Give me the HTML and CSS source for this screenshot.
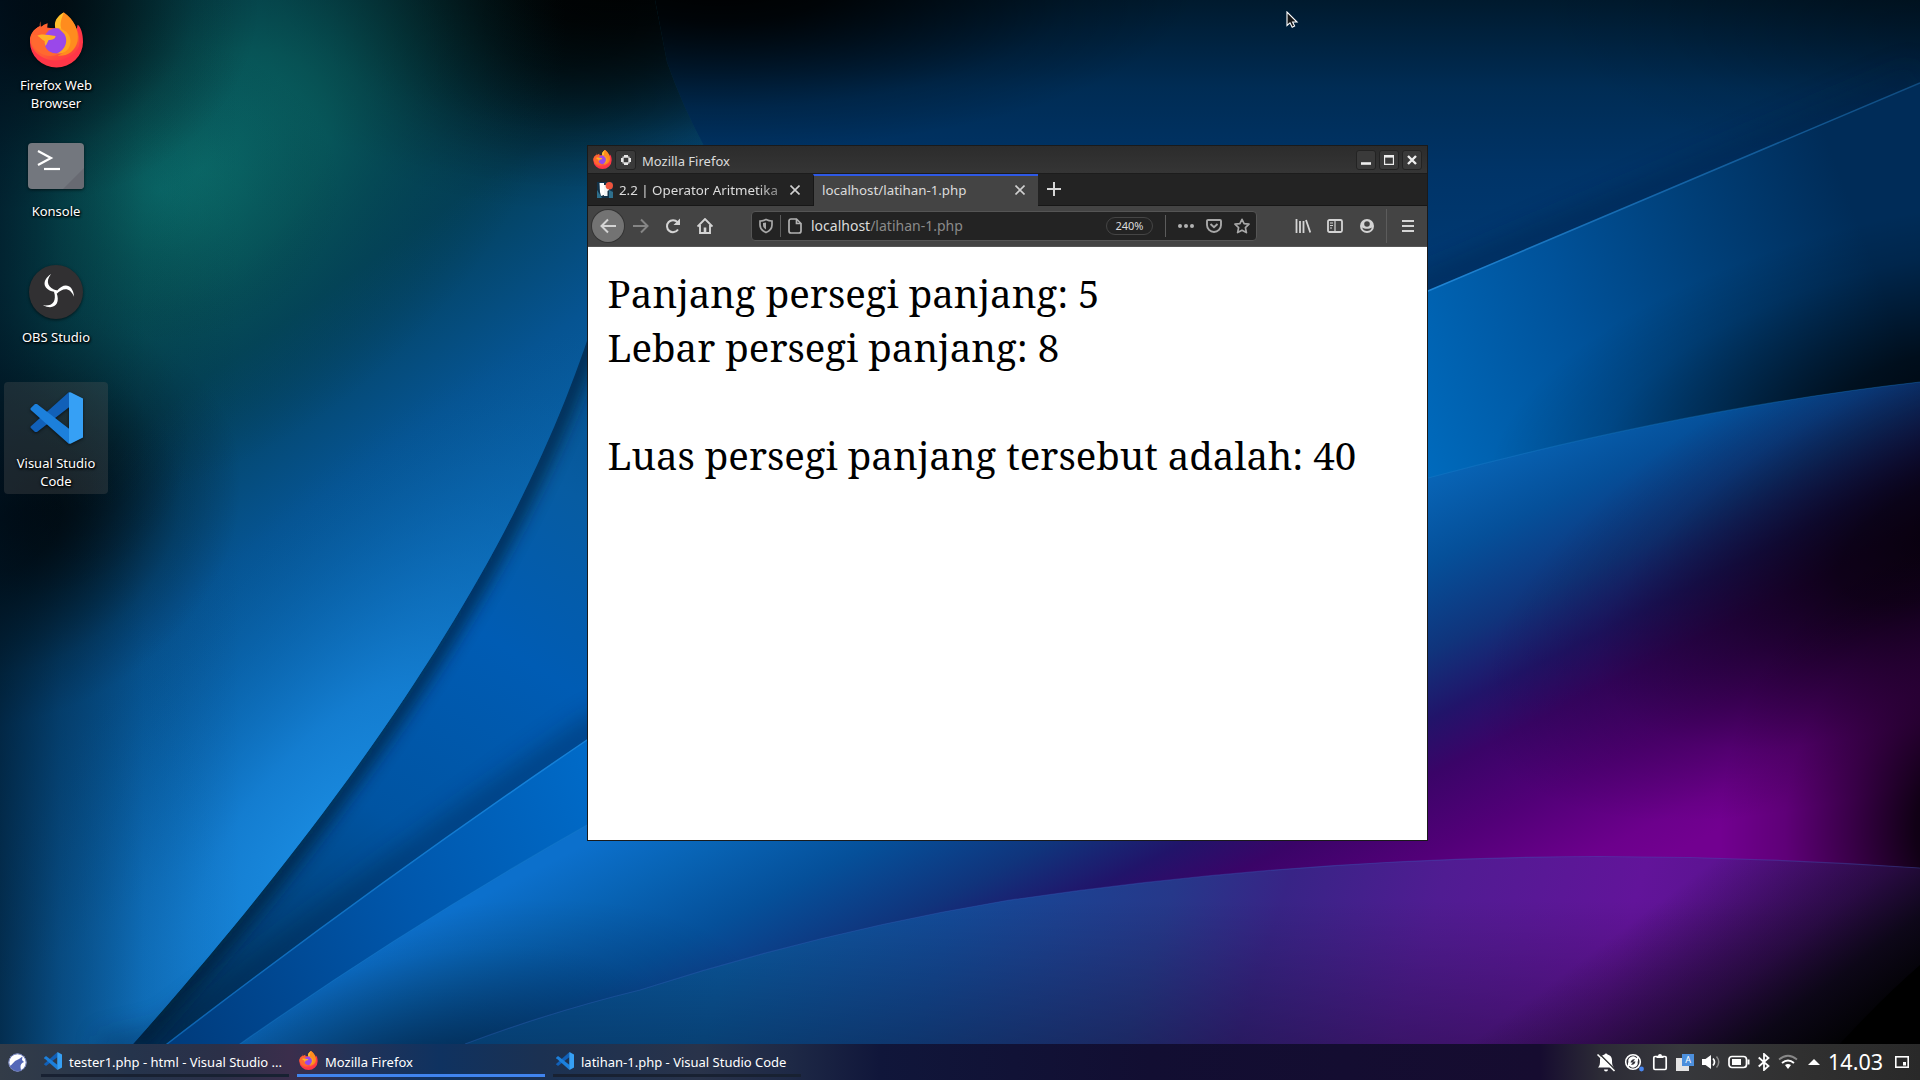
FILE: index.html
```html
<!DOCTYPE html>
<html lang="id">
<head>
<meta charset="utf-8">
<title>Desktop</title>
<link rel="stylesheet" href="styles.css">
</head>
<body>
<svg class="defs" width="0" height="0" aria-hidden="true">
  <defs>
    <linearGradient id="ffBody" x1="0.2" y1="0" x2="0.7" y2="1"><stop offset="0" stop-color="#ff6a2c"/><stop offset="0.75" stop-color="#ff5a36"/><stop offset="1" stop-color="#ff3a45"/></linearGradient>
    <symbol id="firefox" viewBox="0 0 56 56">
      <path fill="#ff3647" d="M10.500 14C4 18 1 24 1 30a27 26 0 0 0 54 0C55 22 53 15 49.500 12.500L48 20Z"/>
      <path fill="url(#ffBody)" d="M11.500 9C11 11 11 12 11 14C4 17 1 23 1 28a26 23.500 0 0 0 50 6C53 22 47 10 35.500 0C29 4 26 10 27 16H18.500L19 11C16 12 14 13 12 15Z"/>
      <path fill="#ff8c1e" d="M35.500 0C46 7 51 18 49.500 29C47 40 38 45 29 44C38 41 43 33 40 24C37 17 32 16 27 16C26 9 30 3 35.500 0Z"/>
      <path fill="#ffc02c" d="M35.500 0C28 4 25 10 27 16L33 17C31 12 33 6 35.500 0Z"/>
      <circle cx="28" cy="29" r="13" fill="#9a48ea"/>
      <path fill="#ffa51f" d="M30 16C40 17 46 28 40 37C37 41 33 42 28 42C38 38 40 28 36 22Z"/>
      <path fill="#ffb127" d="M8 24C13 21 19 23 27 24C27 27 24 28 20 28L17 34C15 29 12 27 8 24Z"/>
      <path fill="#ff6930" d="M3 23C8 21 13 28 16 29C15 38 22 42 30 42C20 48 7 41 3 32Z"/>
    </symbol>
    <symbol id="vscode" viewBox="0 0 53 52">
      <path fill="#1160b8" d="M39 0L0.800 34.200Q0 35 0.800 36L5 40H7L40 14.500Z"/>
      <path fill="#1c80dc" d="M39 52L0.800 18Q0 17 0.800 16L5 12H7L40 37.500Z"/>
      <path fill="#36a0f5" d="M39 0.500Q40 0 41 0.500L53 6.500V45.500L41 51.500Q40 52 39 51.500Z"/>
    </symbol>
    <symbol id="close" viewBox="0 0 10 10"><path d="M0.500 0.500L9.500 9.500M9.500 0.500L0.500 9.500" fill="none" stroke="currentColor" stroke-width="1.600"/></symbol>
  </defs>
</svg>

<main class="screen">
  <svg class="wallpaper" viewBox="0 0 1920 1080" preserveAspectRatio="none" aria-hidden="true">
    <defs>
      <radialGradient id="gTeal"><stop offset="0" stop-color="#0b706e"/><stop offset="0.350" stop-color="#09605f" stop-opacity="0.750"/><stop offset="0.700" stop-color="#06484f" stop-opacity="0.300"/><stop offset="1" stop-color="#04303a" stop-opacity="0"/></radialGradient>
      <radialGradient id="gBright"><stop offset="0" stop-color="#1a8be0"/><stop offset="0.300" stop-color="#1580d4" stop-opacity="0.850"/><stop offset="0.650" stop-color="#0c6cb8" stop-opacity="0.450"/><stop offset="1" stop-color="#065a9c" stop-opacity="0"/></radialGradient>
      <radialGradient id="gBlack"><stop offset="0" stop-color="#000" stop-opacity="1"/><stop offset="0.250" stop-color="#000" stop-opacity="0.850"/><stop offset="0.500" stop-color="#000" stop-opacity="0.500"/><stop offset="0.750" stop-color="#000" stop-opacity="0.170"/><stop offset="1" stop-color="#000" stop-opacity="0"/></radialGradient>
      <linearGradient id="fTop" gradientUnits="userSpaceOnUse" x1="0" y1="0" x2="0" y2="290"><stop offset="0" stop-color="#001a2e"/><stop offset="0.300" stop-color="#002c54"/><stop offset="0.600" stop-color="#003468"/><stop offset="1" stop-color="#003b76"/></linearGradient>
      <linearGradient id="fB" gradientUnits="userSpaceOnUse" x1="160" y1="1044" x2="1920" y2="390"><stop offset="0" stop-color="#003a7a"/><stop offset="0.150" stop-color="#0057ac"/><stop offset="0.300" stop-color="#0070d0"/><stop offset="0.740" stop-color="#006abc"/><stop offset="0.840" stop-color="#00529a"/><stop offset="0.920" stop-color="#003f78"/><stop offset="1" stop-color="#002c58"/></linearGradient>
      <linearGradient id="fC" gradientUnits="userSpaceOnUse" x1="459" y1="908" x2="684" y2="1353"><stop offset="0" stop-color="#0c70cc"/><stop offset="0.120" stop-color="#0863b4"/><stop offset="0.260" stop-color="#05509a"/><stop offset="0.420" stop-color="#10347c"/><stop offset="0.540" stop-color="#21146a"/><stop offset="0.640" stop-color="#3a0468"/><stop offset="0.780" stop-color="#520078"/><stop offset="0.930" stop-color="#6c008c"/><stop offset="1" stop-color="#720090"/></linearGradient>
      <linearGradient id="fD" gradientUnits="userSpaceOnUse" x1="465" y1="900" x2="1750" y2="1300"><stop offset="0" stop-color="#07559c"/><stop offset="0.200" stop-color="#0b5aa2"/><stop offset="0.350" stop-color="#144a98"/><stop offset="0.500" stop-color="#26388a"/><stop offset="0.580" stop-color="#382486"/><stop offset="0.690" stop-color="#501c92"/><stop offset="0.830" stop-color="#62149a"/><stop offset="1" stop-color="#50107f"/></linearGradient>
      <linearGradient id="dCorner" gradientUnits="userSpaceOnUse" x1="1030" y1="1373" x2="1165" y2="1553"><stop offset="0" stop-color="#05060c" stop-opacity="0"/><stop offset="0.500" stop-color="#05060c" stop-opacity="0.520"/><stop offset="0.750" stop-color="#05060c" stop-opacity="0.880"/><stop offset="1" stop-color="#020204"/></linearGradient>
      <linearGradient id="dBottom" gradientUnits="userSpaceOnUse" x1="0" y1="900" x2="0" y2="1044"><stop offset="0" stop-color="#000" stop-opacity="0"/><stop offset="1" stop-color="#000" stop-opacity="0.280"/></linearGradient>
      <linearGradient id="fMid" gradientUnits="userSpaceOnUse" x1="640" y1="340" x2="200" y2="1044"><stop offset="0" stop-color="#06508a"/><stop offset="0.200" stop-color="#075ca2"/><stop offset="0.400" stop-color="#005cb4"/><stop offset="0.650" stop-color="#0054a2"/><stop offset="1" stop-color="#003258"/></linearGradient>
      <linearGradient id="fA" gradientUnits="userSpaceOnUse" x1="100" y1="250" x2="420" y2="700"><stop offset="0" stop-color="#033f4a"/><stop offset="0.300" stop-color="#03405a"/><stop offset="0.600" stop-color="#065492"/><stop offset="1" stop-color="#0c6cba"/></linearGradient>
      <linearGradient id="edge" gradientUnits="userSpaceOnUse" x1="160" y1="0" x2="1920" y2="0"><stop offset="0" stop-color="#0d62ae"/><stop offset="0.200" stop-color="#1480d8"/><stop offset="0.720" stop-color="#2086d6"/><stop offset="0.850" stop-color="#1566aa"/><stop offset="1" stop-color="#104c80"/></linearGradient>
      <linearGradient id="leftDark" gradientUnits="userSpaceOnUse" x1="0" y1="0" x2="240" y2="0"><stop offset="0" stop-color="#001424" stop-opacity="0.700"/><stop offset="0.250" stop-color="#001424" stop-opacity="0.380"/><stop offset="0.600" stop-color="#001424" stop-opacity="0.100"/><stop offset="1" stop-color="#001424" stop-opacity="0"/></linearGradient>
      <filter id="soft" x="-20%" y="-20%" width="140%" height="140%"><feGaussianBlur stdDeviation="12"/></filter>
      <filter id="tight" x="-20%" y="-20%" width="140%" height="140%"><feGaussianBlur stdDeviation="8"/></filter>
      <clipPath id="cpA"><path d="M0 0H655L667 62Q682 105 704 146V300H600C545 485 425 715 133 1044L100 1080H0Z"/></clipPath>
      <clipPath id="cpB"><path d="M120 1080L167 1044Q375 884 587 740Q980 480 1428 291L1920 83V1080Z"/></clipPath>
      <clipPath id="cpC"><path d="M190 1080L240 1044Q410 925 587 825Q980 585 1428 478Q1690 408 1920 382V1080Z"/></clipPath>
      <clipPath id="cpD"><path d="M360 1080L465 1044Q550 1012 640 990Q820 932 1004 901Q1300 857 1600 856.500Q1760 857 1920 868V1080Z"/></clipPath>
    </defs>
    <rect width="1920" height="1080" fill="url(#fTop)"/>
    <ellipse cx="1950" cy="-20" rx="420" ry="200" fill="url(#gBlack)" opacity="0.350"/>
    <ellipse cx="720" cy="-20" rx="480" ry="170" fill="url(#gBlack)"/>
    <path d="M560 290H780V700L167 1080H60Z" fill="url(#fMid)"/>
    <path d="M602 300C547 485 427 715 135 1044" fill="none" stroke="#001a34" stroke-width="20" opacity="0.700" filter="url(#tight)"/>
    <g clip-path="url(#cpA)">
      <rect width="720" height="1080" fill="url(#fA)"/>
      <ellipse cx="320" cy="840" rx="620" ry="260" fill="url(#gBright)" transform="rotate(-52 320 840)"/>
      <ellipse cx="0" cy="520" rx="250" ry="200" fill="url(#gBlack)" transform="rotate(-25 0 520)"/>
      <ellipse cx="20" cy="440" rx="170" ry="160" fill="url(#gBlack)" opacity="0.500"/>
      <ellipse cx="620" cy="-30" rx="460" ry="220" fill="url(#gBlack)"/>
      <ellipse cx="560" cy="20" rx="300" ry="190" fill="url(#gBlack)" opacity="0.600"/>
      <ellipse cx="200" cy="170" rx="420" ry="270" fill="url(#gTeal)" opacity="0.900" transform="rotate(-40 200 170)"/>
      <ellipse cx="160" cy="190" rx="180" ry="150" fill="url(#gTeal)" opacity="0.500"/>
      <ellipse cx="0" cy="0" rx="260" ry="210" fill="url(#gBlack)"/>
      <rect width="240" height="1080" fill="url(#leftDark)"/>
    </g>
    <path d="M100 1052L167 1038Q375 878 587 734L1428 285L1920 77" fill="none" stroke="#001d3c" stroke-width="30" opacity="0.350" filter="url(#soft)"/>
    <g clip-path="url(#cpB)">
      <rect width="1920" height="1080" fill="url(#fB)"/>
      <ellipse cx="1940" cy="400" rx="460" ry="190" fill="url(#gBlack)" opacity="0.800" transform="rotate(-12 1940 400)"/>
    </g>
    <path d="M120 1080L167 1044Q375 884 587 740Q980 480 1428 291L1920 83" fill="none" stroke="url(#edge)" stroke-width="1.500"/>
    <g clip-path="url(#cpC)">
      <rect width="1920" height="1080" fill="url(#fC)"/>
      <ellipse cx="400" cy="1090" rx="380" ry="170" fill="url(#gBlack)" opacity="0.450" transform="rotate(-15 400 1090)"/>
      <ellipse cx="1960" cy="530" rx="520" ry="220" fill="url(#gBlack)" opacity="0.900" transform="rotate(-24 1960 530)"/>
      <ellipse cx="1980" cy="830" rx="260" ry="300" fill="url(#gBlack)"/>
    </g>
    <path d="M190 1080L240 1044Q410 925 587 825Q980 585 1428 478Q1690 408 1920 382" fill="none" stroke="#1d80cc" stroke-opacity="0.350" stroke-width="1.200"/>
    <g clip-path="url(#cpD)">
      <rect width="1920" height="1080" fill="url(#fD)"/>
      <rect width="1920" height="1080" fill="url(#dBottom)"/>
      <rect width="1920" height="1080" fill="url(#dCorner)"/>
      <path d="M1840 1044Q1880 1000 1920 965V1044Z" fill="#000"/>
    </g>
    <path d="M465 1044Q550 1012 640 990Q820 932 1004 901Q1300 857 1600 856.500Q1760 857 1920 868" fill="none" stroke="#3c66c4" stroke-opacity="0.300" stroke-width="1.200"/>
  </svg>

  <section class="desktop">
    <nav class="launchers">
      <a class="launcher"><span class="art"><svg width="55" height="56"><use href="#firefox"/></svg></span><span class="name">Firefox Web Browser</span></a>
      <a class="launcher"><span class="art"><svg width="56" height="46" viewBox="0 0 56 46"><rect width="56" height="46" rx="4" fill="#73777e"/><path d="M56 25V42a4 4 0 0 1-4 4H35Z" fill="#686a72"/><path d="M10 8L23 15L10 22" fill="none" stroke="#fff" stroke-width="2.200"/><path d="M16 26H32" stroke="#fff" stroke-width="2.200"/></svg></span><span class="name">Konsole</span></a>
      <a class="launcher"><span class="art"><svg width="54" height="54" viewBox="-27 -27 54 54"><circle r="27" fill="#313032"/><g fill="#fff"><path id="arm" d="M-5 -18C-15 -11 -13 -2 -1 0L1 -1.500C-8 -4 -11 -10 -5 -18Z"/><use href="#arm" transform="rotate(120)"/><use href="#arm" transform="rotate(240)"/><circle r="1.800"/></g></svg></span><span class="name">OBS Studio</span></a>
      <a class="launcher selected"><span class="art"><svg width="53" height="52"><use href="#vscode"/></svg></span><span class="name">Visual Studio Code</span></a>
    </nav>

    <article class="window">
      <header class="titlebar">
        <svg class="app" width="19" height="19"><use href="#firefox"/></svg>
        <span class="tool pin"><svg width="10" height="10" viewBox="0 0 10 10"><path d="M3 1.200H7M3 8.800H7M1.200 3V7M8.800 3V7" fill="none" stroke="#e6e6e6" stroke-width="2.400"/><rect x="2" y="2" width="6" height="6" fill="none" stroke="#e6e6e6" stroke-width="1"/></svg></span>
        <h1>Mozilla Firefox</h1>
        <span class="tool"><svg width="10" height="10" viewBox="0 0 10 10"><path d="M0 8.500H10" stroke="#eee" stroke-width="2.600"/></svg></span>
        <span class="tool"><svg width="10" height="10" viewBox="0 0 10 10"><path d="M0.500 1H9.500M0.500 0V10M9.500 0V10M0 9.500H10" fill="none" stroke="#eee" stroke-width="1.300"/><path d="M0 1.300H10" stroke="#eee" stroke-width="2.600"/></svg></span>
        <span class="tool"><svg width="10" height="10" viewBox="0 0 10 10"><path d="M1 1L9 9M9 1L1 9" stroke="#eee" stroke-width="2.400"/></svg></span>
      </header>
      <div class="tabs">
        <div class="tab">
          <svg class="favicon" width="16" height="16" viewBox="0 0 16 16"><rect width="16" height="16" fill="#123248"/><path d="M0 8L5 16H0ZM12 8L16 10V16H12Z" fill="#2e6f8c"/><path d="M2.500 1H7V13L4 14L3 10Z" fill="#fff"/><path d="M7 3H12V8L10.500 9V14H7Z" fill="#f3f5f5"/><circle cx="12.300" cy="3.700" r="3.700" fill="#f0543c"/></svg>
          <span class="label faded">2.2 | Operator Aritmetika</span>
          <svg class="x" width="10" height="10"><use href="#close"/></svg>
        </div>
        <div class="tab active">
          <span class="label">localhost/latihan-1.php</span>
          <svg class="x" width="10" height="10"><use href="#close"/></svg>
        </div>
        <svg class="plus" width="14" height="14" viewBox="0 0 14 14"><path d="M7 0V14M0 7H14" stroke="#d6d6d6" stroke-width="2"/></svg>
      </div>
      <div class="navbar">
        <span class="btn back"><svg width="16" height="16" viewBox="0 0 16 16"><path d="M16 8H1.500M8 1.500L1.500 8L8 14.500" fill="none" stroke="#d4d4d4" stroke-width="2"/></svg></span>
        <span class="btn dim"><svg width="16" height="16" viewBox="0 0 16 16"><path d="M0 8H14.500M8 1.500L14.500 8L8 14.500" fill="none" stroke="currentColor" stroke-width="2"/></svg></span>
        <span class="btn"><svg width="16" height="16" viewBox="0 0 16 16"><path d="M13 11.500A6 6 0 1 1 12.500 4.200L14 6" fill="none" stroke="currentColor" stroke-width="2"/><path d="M15 0.500V7H8.500Z" fill="currentColor"/></svg></span>
        <span class="btn"><svg width="16" height="16" viewBox="0 0 16 16"><path d="M0.500 8.500L8 1L15.500 8.500M3 7V15H13V7" fill="none" stroke="currentColor" stroke-width="1.900"/><path d="M6.700 15V9.500H9.300V15" fill="currentColor"/></svg></span>
        <div class="urlbar">
          <svg class="shield" width="14" height="16" viewBox="0 0 14 16"><path d="M7 1.500C9 2.500 11 3 13 3V7C13 10.500 10.500 13 7 14.500C3.500 13 1 10.500 1 7V3C3 3 5 2.500 7 1.500Z" fill="none" stroke="#a8a8a8" stroke-width="1.700"/><path d="M7 4.500V11.500C5 10.300 4 9 4 7V5Z" fill="#a8a8a8"/></svg>
          <i class="sep short"></i>
          <svg class="page" width="14" height="16" viewBox="0 0 14 16"><path d="M3 1H8.500L13 5.500V13A2 2 0 0 1 11 15H3A2 2 0 0 1 1 13V3A2 2 0 0 1 3 1ZM8.500 1V5.500H13" fill="none" stroke="#b2b2b2" stroke-width="1.700"/></svg>
          <span class="url">localhost<em>/latihan-1.php</em></span>
          <span class="zoom">240%</span>
          <i class="sep short"></i>
          <svg class="dots" width="16" height="4" viewBox="0 0 16 4" fill="#b2b2b2"><circle cx="2" cy="2" r="2"/><circle cx="8" cy="2" r="2"/><circle cx="14" cy="2" r="2"/></svg>
          <svg class="pocket" width="16" height="14" viewBox="0 0 16 14"><path d="M2 1H14A1 1 0 0 1 15 2V6A7 7 0 0 1 1 6V2A1 1 0 0 1 2 1ZM4.500 5L8 8.300L11.500 5" fill="none" stroke="#a8a8a8" stroke-width="1.900"/></svg>
          <svg width="16" height="16" viewBox="0 0 16 16"><path d="M8 1.300L10.100 5.600L15 6.200L11.400 9.600L12.400 14.600L8 12.200L3.600 14.600L4.600 9.600L1 6.200L5.900 5.600Z" fill="none" stroke="#a8a8a8" stroke-width="1.700" stroke-linejoin="round"/></svg>
        </div>
        <span class="btn"><svg width="16" height="14" viewBox="0 0 16 14"><path d="M1.500 0V14M5 2V14M8.500 2V14M11 1L15.300 13.500" fill="none" stroke="currentColor" stroke-width="1.800"/></svg></span>
        <span class="btn"><svg width="16" height="14" viewBox="0 0 16 14"><rect x="1" y="1" width="14" height="12" rx="1.500" fill="none" stroke="currentColor" stroke-width="1.800"/><path d="M8 1V13M3 4H6M3 6.500H6M3 9H5" stroke="currentColor" stroke-width="1.200"/></svg></span>
        <span class="btn"><svg width="14" height="14" viewBox="0 0 14 14"><circle cx="7" cy="7" r="7" fill="currentColor"/><path d="M4.200 5a2.800 2.800 0 0 1 5.600 0a2.800 2.800 0 0 1-5.600 0ZM2.200 8.500C4 10.300 10 10.300 11.800 8.500C11 13.300 3 13.300 2.200 8.500Z" fill="#444"/></svg></span>
        <i class="sep tall"></i>
        <span class="btn menu"><svg width="12" height="12" viewBox="0 0 12 12"><path d="M0 1H12M0 6H12M0 11H12" stroke="currentColor" stroke-width="2"/></svg></span>
      </div>
      <div class="document">
        <p>Panjang persegi panjang: 5</p>
        <p>Lebar persegi panjang: 8</p>
        <p class="result">Luas persegi panjang tersebut adalah: 40</p>
      </div>
    </article>

    <svg class="cursor" width="13" height="19" viewBox="0 0 13 19"><path d="M1 1V14.500L4 11.800L6.200 16.200L8.600 15L6.600 11H11Z" fill="#171717" stroke="#fff" stroke-width="1.100"/></svg>
  </section>

  <footer class="taskbar">
    <span class="start"><svg width="19" height="19" viewBox="0 0 19 19"><circle cx="9.500" cy="9.500" r="9" fill="#fff"/><path d="M1.300 12.500C4 13 5 9 8 7.500L11 6L14.500 3.500L14 7L16 9C13 10 12.500 12 12.500 14L13 17.500A9 9 0 0 1 1.300 12.500Z" fill="#5468b8"/><circle cx="9.500" cy="9.500" r="8.700" fill="none" stroke="#6272b4" stroke-width="1"/></svg></span>
    <a class="task"><svg width="18" height="18"><use href="#vscode"/></svg><span>tester1.php - html - Visual Studio ...</span></a>
    <a class="task current"><svg width="19" height="19"><use href="#firefox"/></svg><span>Mozilla Firefox</span></a>
    <a class="task"><svg width="18" height="18"><use href="#vscode"/></svg><span>latihan-1.php - Visual Studio Code</span></a>
    <div class="tray">
      <svg width="20" height="20" viewBox="0 0 20 20"><path d="M2 15.500C4 13.500 4 11 4 8C4 5 6 3 8.500 2.500A1.600 1.600 0 0 1 11.500 2.500C14 3 16 5 16 8C16 11 16 13.500 18 15.500ZM8 17.500H12A2 2 0 0 1 8 17.500Z" fill="#fff"/><path d="M3 1.500L19 17.500" stroke="#333438" stroke-width="1.600"/><path d="M1.500 2.500L18.500 19" stroke="#fff" stroke-width="1.600"/></svg>
      <svg width="20" height="20" viewBox="0 0 20 20"><circle cx="9" cy="10" r="7.300" fill="none" stroke="#fff" stroke-width="1.600"/><path d="M4.500 10.500A4.700 4.700 0 0 1 12.500 6L14 4.500V9.500H9L11 7.500C9 6.500 7 8 6.500 10.500ZM13.500 9.500A4.700 4.700 0 0 1 5.500 14L4 15.500V10.500H9L7 12.500C9 13.500 11 12 11.500 9.500Z" fill="#fff"/><circle cx="17.500" cy="17" r="2.400" fill="#4886f0"/></svg>
      <svg width="16" height="18" viewBox="0 0 16 18"><path d="M3 3.500H13A1.200 1.200 0 0 1 14.200 4.700V15.300A1.200 1.200 0 0 1 13 16.500H3A1.200 1.200 0 0 1 1.800 15.300V4.700A1.200 1.200 0 0 1 3 3.500Z" fill="none" stroke="#fff" stroke-width="1.700"/><path d="M4.500 5V3H6A2 2 0 0 1 10 3H11.500V5Z" fill="#fff"/></svg>
      <span class="translate"><i></i><b>A</b></span>
      <svg width="18" height="16" viewBox="0 0 18 16"><path d="M0 5H3.500L9 1V15L3.500 11H0Z" fill="#fff"/><path d="M11 4.500Q14 8 11 11.500" fill="none" stroke="#fff" stroke-width="1.700"/><path d="M14.500 2.500Q19 8 14.500 13.500" fill="none" stroke="#888" stroke-width="1.500"/></svg>
      <svg width="22" height="14" viewBox="0 0 22 14"><rect x="1" y="1.500" width="17.500" height="11" rx="3" fill="none" stroke="#fff" stroke-width="1.700"/><rect x="4" y="4" width="9" height="6" fill="#fff"/><path d="M20.500 4.500V9.500" stroke="#fff" stroke-width="2"/></svg>
      <svg width="12" height="18" viewBox="0 0 12 18"><path d="M0.700 4.500L10.500 13L6 17V1L10.500 5L0.700 13.500" fill="none" stroke="#fff" stroke-width="1.800"/></svg>
      <svg width="20" height="16" viewBox="0 0 20 16"><path d="M1 5.500Q10 -2 19 5.500" fill="none" stroke="#888" stroke-width="1.700"/><path d="M4 9Q10 4 16 9" fill="none" stroke="#fff" stroke-width="1.900"/><path d="M7 11Q10 9 13 11L10 15Z" fill="#fff"/></svg>
      <svg class="expand" width="12" height="6" viewBox="0 0 12 6"><path d="M0 6L6 0L12 6Z" fill="#fff"/></svg>
      <time>14.03</time>
      <svg width="14" height="12" viewBox="0 0 14 12"><rect x="0.800" y="0.800" width="12.400" height="10.400" fill="none" stroke="#fff" stroke-width="1.600"/><rect x="8" y="6" width="3" height="3.500" fill="#fff"/></svg>
    </div>
  </footer>
</main>
</body>
</html>
```
FILE: styles.css
```css
* { box-sizing: border-box; }
body { margin: 0; overflow: hidden; font: 13px/18px "Noto Sans", sans-serif; color: #fff; }
svg { display: block; flex: none; }
.defs { position: absolute; }
.screen { position: relative; display: flex; flex-direction: column; width: 1920px; height: 1080px; overflow: hidden; }
.wallpaper { position: absolute; inset: 0; width: 100%; height: 100%; }

.desktop { position: relative; flex: 1; }
.launchers { display: flex; flex-direction: column; gap: 14px; width: 104px; margin: 4px; }
.launcher { height: 112px; display: flex; flex-direction: column; align-items: center; text-align: center; border-radius: 4px; }
.launcher.selected { background: rgba(90, 90, 90, .3); }
.art { height: 72px; display: flex; align-items: center; justify-content: center; filter: drop-shadow(0 1px 1.500px rgba(0, 0, 0, .6)); }
.name { width: 90px; text-shadow: 1px 1px 2px #000, 0 1px 3px #000; }

.window { position: absolute; left: 587px; top: 145px; width: 841px; height: 696px; display: flex; flex-direction: column; border: 1px solid #1a1a1a; background: #fff; color: #dcdcdc; }
.titlebar { height: 27px; display: flex; align-items: center; gap: 3px; padding: 0 5px; background: linear-gradient(#2c2c2c, #353535); }
.titlebar h1 { flex: 1; margin: 0 0 0 3px; padding-top: 2px; font-size: 13px; font-weight: 400; }
.tool { width: 20px; height: 20px; display: flex; align-items: center; justify-content: center; border: 1px solid #232323; border-radius: 3px; background: #3a3a3a; }
.tool.pin { width: 21px; }

.tabs { height: 33px; display: flex; align-items: stretch; background: #232323; border-bottom: 1px solid #171717; border-top: 1px solid #1c1c1c; font-size: 13.33px; }
.tab { width: 225px; display: flex; align-items: center; padding: 0 13px 0 9px; }
.tab.active { position: relative; width: 225px; margin-bottom: -1px; background: #444; border-top: 2px solid #2e59e6; border-left: 1px solid #171717; padding: 0 13px 2px 8px; }
.favicon { margin-right: 6px; }
.label { flex: 1; white-space: nowrap; overflow: hidden; }
.label.faded { flex: none; width: 161px; mask-image: linear-gradient(90deg, #000 85%, rgba(0, 0, 0, .5)); }
.x { margin-left: auto; color: #d0d0d0; }
.plus { margin: 8px 0 0 9px; }

.navbar { height: 41px; display: flex; align-items: center; background: #444; border-bottom: 1px solid #555; padding-left: 4px; }
.btn { width: 32px; height: 32px; display: flex; align-items: center; justify-content: center; color: #d4d4d4; }
.btn.back { background: #737373; border-radius: 50%; box-shadow: 0 0 0 1px #333; margin-right: 1px; }
.btn.dim { color: #858585; }
.urlbar { width: 506px; height: 30px; margin: 0 30px; padding-left: 7px; display: flex; align-items: center; background: #232323; border: 1px solid #555; border-radius: 4px; }
.sep { width: 1px; background: #5c5c5c; }
.sep.short { height: 22px; }
.sep.tall { height: 34px; margin-left: 3px; }
.shield { margin-right: 7px; }
.page { margin: 0 9px 0 7px; }
.url { flex: 1; font-size: 14px; }
.url em { font-style: normal; color: #8a8a8a; }
.zoom { width: 47px; height: 18px; margin-right: 12px; border: 1px solid #454545; border-radius: 9px; text-align: center; font-size: 11px; line-height: 16px; }
.dots { margin: 0 12px; }
.pocket { margin-right: 12px; }
.urlbar svg:last-child { margin-right: 6px; }
.menu { margin-left: 5px; }

.document { flex: 1; padding: 19px 19.6px; background: #fff; color: #000; font: 38.4px/54px "Noto Serif", "DejaVu Serif Condensed", "DejaVu Serif", serif; white-space: nowrap; }
.document p { margin: 0; }
.document .result { margin-top: 54px; }
.cursor { position: absolute; left: 1286px; top: 11px; }

.taskbar { position: relative; height: 36px; display: flex; gap: 8px; background: linear-gradient(90deg, #333c48 0, #25344c 130px, #2b3048 220px, #3b2e4c 290px, #233358 350px, #0f3260 440px, #1b3152 540px, #29334a 700px, #1e2946 790px, #10163a 880px, #120e32 1150px, #160c30 1540px, #2c2b36 1600px, #37383c 1680px, #303030 1800px, #292929 100%); }
.start { width: 33px; padding: 9px 0 0 8px; }
.task { width: 248px; height: 33px; display: flex; align-items: center; gap: 7px; padding: 3px 0 0 3px; border-bottom: 3px solid #182132; white-space: nowrap; }
.task span { padding-top: 2px; }
.task.current { border-color: #4084ee; }
.task.current svg { margin-left: -1px; }
.tray { flex: 1; display: flex; align-items: center; justify-content: flex-end; gap: 8px; padding-right: 11px; }
.expand { margin-left: 2px; }
.tray time { margin: 0 4px 0 0; font-size: 21.500px; line-height: 36px; }
.translate { position: relative; width: 18px; height: 17px; }
.translate i { position: absolute; left: 0; top: 4px; width: 13px; height: 13px; background: #e4e4e4; }
.translate b { position: absolute; right: 0; top: 0; width: 12px; height: 12px; background: #4c8fdc; font: 9px/12px "Noto Sans", sans-serif; text-align: center; }
```
